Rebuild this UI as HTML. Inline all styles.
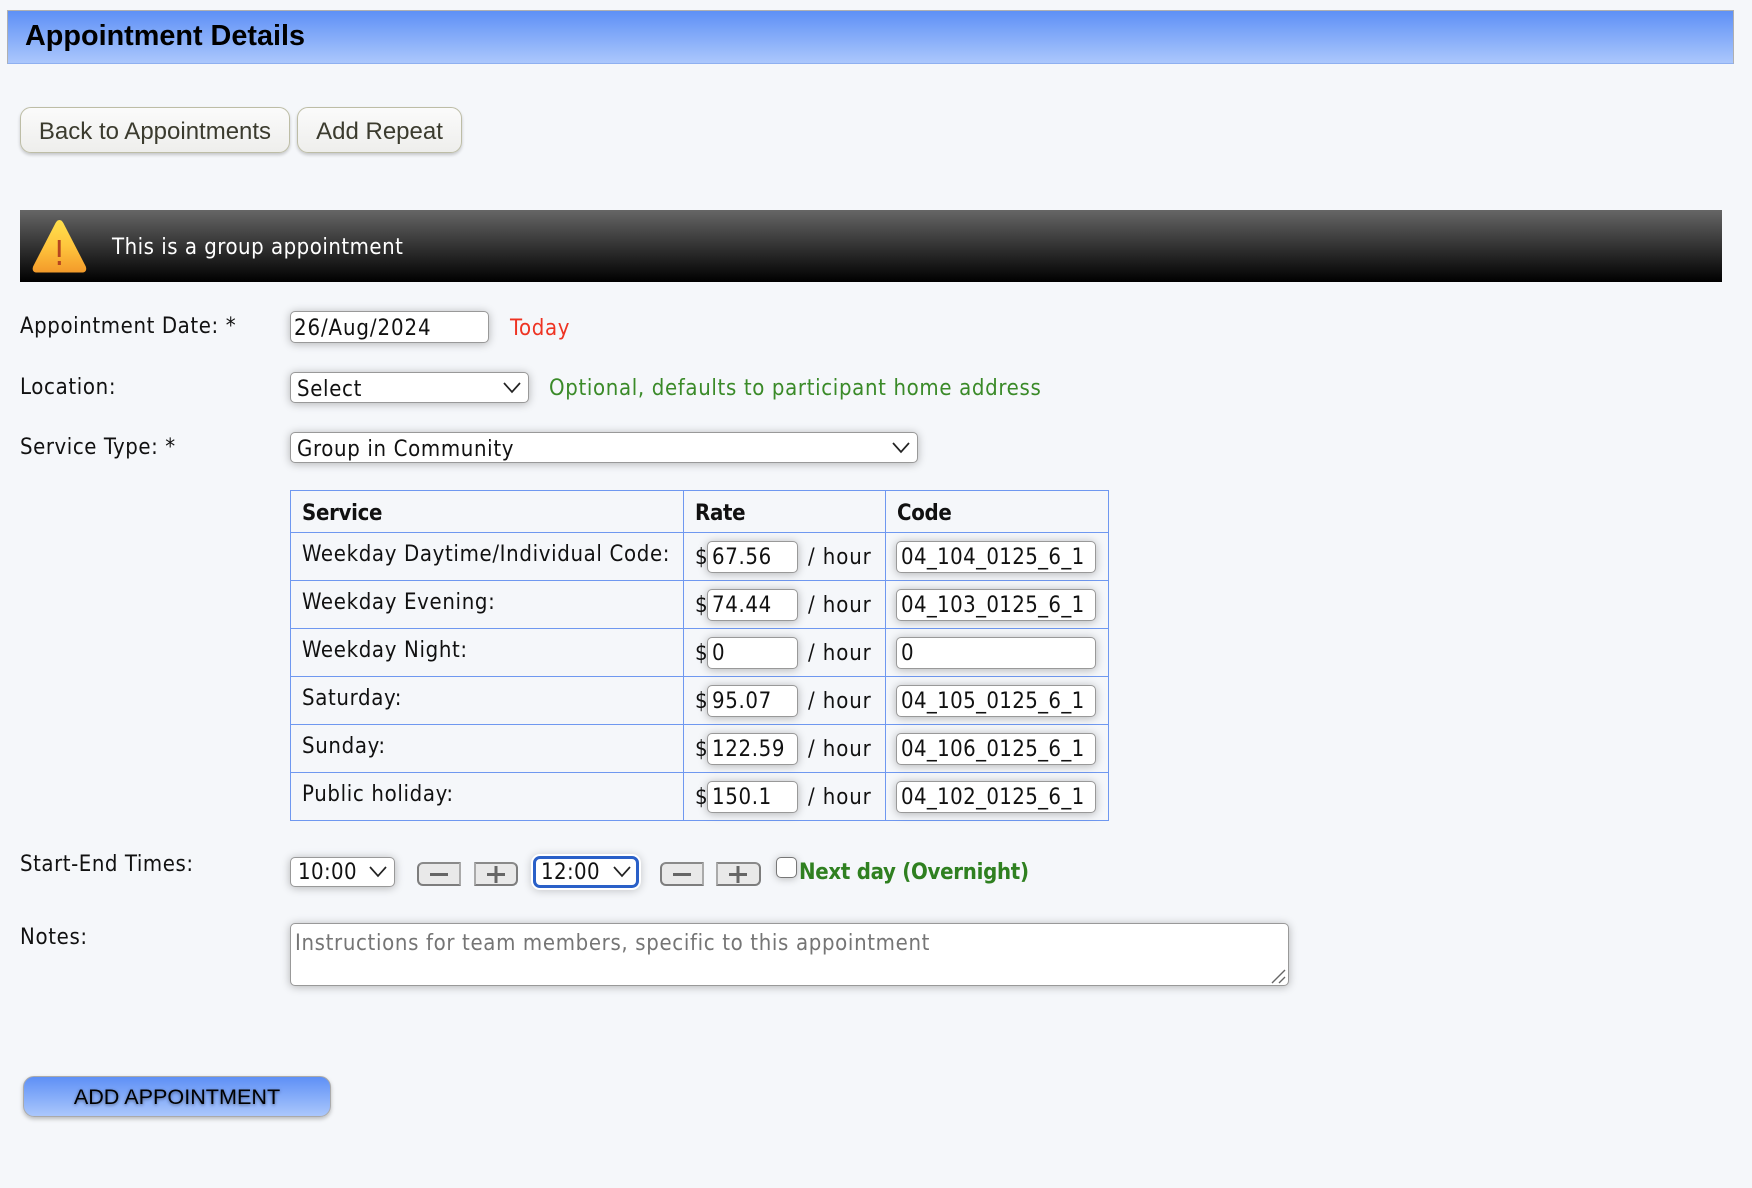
<!DOCTYPE html>
<html lang="en"><head><meta charset="utf-8"><title>Appointment Details</title>
<style>
*{box-sizing:border-box}
html,body{margin:0;padding:0;width:1752px;height:1188px;overflow:hidden;background:#f5f7fa}
body{position:relative;font-family:"DejaVu Sans Condensed","DejaVu Sans","Liberation Sans",sans-serif;font-stretch:condensed;font-size:22px;color:#111;letter-spacing:.65px}
.a,.t{position:absolute;white-space:nowrap}
.t{line-height:24px}
.hd{left:7px;top:10px;width:1727px;height:54px;background:linear-gradient(#5e90f6,#abc7fc);border:1px solid #b0b0b0;border-bottom:1px solid #8fb0f0}
.ttl{left:25px;top:20px;font:bold 28.800px/33px "Liberation Sans",sans-serif;color:#000;font-stretch:normal;letter-spacing:0}
.btn{position:absolute;top:107px;height:46px;border:1px solid #bdbda6;border-radius:11px;background:linear-gradient(#fbfbfb,#eeeeec);box-shadow:0 2px 3px rgba(0,0,0,.2);font:24px/48px "Liberation Sans",sans-serif;color:#3b3b2e;text-align:center;padding:0;font-stretch:normal;letter-spacing:0}
.warn{left:20px;top:210px;width:1702px;height:72px;background:linear-gradient(#666,#000)}
input,.sel,textarea{font:inherit;font-stretch:condensed;color:#111;letter-spacing:.65px}
input[type=text],.sel,textarea{position:absolute;background:#fff;border:1px solid #999;border-radius:5px;box-shadow:0 1px 9px rgba(0,0,0,.28);outline:none;margin:0}
input[type=text]{padding:0 3px 0 3px}
.sel{line-height:33px;padding-left:6px;white-space:nowrap}
.sel svg{position:absolute;top:8px}
table{position:absolute;left:290px;top:490px;border-collapse:collapse;table-layout:fixed;width:818px}
td,th{border:1px solid #6f98f0;padding:0;position:relative;text-align:left;font-weight:normal}
th{height:42px;font-weight:bold;letter-spacing:-.3px}
td{height:48px}
td span,th span{position:absolute;line-height:24px;white-space:nowrap}
td input[type=text]{top:8px;height:32px;padding-left:4px}
td .c{letter-spacing:.37px}
td .h{letter-spacing:.9px}
.bev{position:absolute;top:862px;height:24px;background:#e9e9e9;border:2px solid #7d7d7d;border-top-color:#8a8a8a}
.bev svg{position:absolute;left:0;top:0}
.m{border-radius:6px 0 0 6px;border-right-color:#aaa}
.p{border-radius:0 6px 6px 0;border-left-color:#aaa}
</style></head><body>
<div class="a hd"></div>
<div class="t ttl" style="position:absolute">Appointment Details</div>
<button class="btn" style="left:20px;width:270px">Back to Appointments</button>
<button class="btn" style="left:297px;width:165px">Add Repeat</button>
<div class="a warn"></div>
<svg class="a" style="left:30px;top:216px" width="60" height="60" viewBox="0 0 54 60" preserveAspectRatio="none"><defs><linearGradient id="w" x1="0" y1="0" x2="0" y2="1"><stop offset="0" stop-color="#ffe14d"/><stop offset=".5" stop-color="#ffc53d"/><stop offset="1" stop-color="#f39a2a"/></linearGradient></defs><path d="M26.500 4C28 4 29 5 30 7L50 50C51.500 54 50 56.500 47 56.500H6C3 56.500 1.500 54 3 50L23 7C24 5 25 4 26.500 4Z" fill="url(#w)"/><rect x="25" y="24" width="2.600" height="17" fill="#b5451f"/><rect x="25" y="45" width="2.800" height="4" fill="#b5451f"/></svg>
<div class="t" style="left:112px;top:236px;color:#fff;letter-spacing:.5px">This is a group appointment</div>

<div class="t" style="left:20px;top:315px;letter-spacing:.6px">Appointment Date: *</div>
<input type="text" value="26/Aug/2024" style="left:290px;top:311px;width:199px;height:32px;padding-top:2px;letter-spacing:.9px">
<div class="t" style="left:510px;top:317px;color:#ee3322">Today</div>

<div class="t" style="left:20px;top:376px">Location:</div>
<div class="sel" style="left:290px;top:372px;width:239px;height:31px">Select<svg style="right:5px" width="22" height="14" viewBox="0 0 22 14"><path d="M3 2L11 11L19 2" fill="none" stroke="#222" stroke-width="1.700"/></svg></div>
<div class="t" style="left:549px;top:377px;color:#3a8a28">Optional, defaults to participant home address</div>

<div class="t" style="left:20px;top:436px;letter-spacing:.55px">Service Type: *</div>
<div class="sel" style="left:290px;top:432px;width:628px;height:31px">Group in Community<svg style="right:5px" width="22" height="14" viewBox="0 0 22 14"><path d="M3 2L11 11L19 2" fill="none" stroke="#222" stroke-width="1.700"/></svg></div>

<table><colgroup><col style="width:393px"><col style="width:202px"><col style="width:223px"></colgroup>
<tr><th><span style="left:11px;top:11px">Service</span></th><th><span style="left:11px;top:11px">Rate</span></th><th><span style="left:11px;top:11px">Code</span></th></tr>
<tr><td><span style="left:11px;top:10px">Weekday Daytime/Individual Code:</span></td><td><span style="left:11px;top:13px">$</span><input type="text" value="67.56" style="left:23px;width:91px"><span class="h" style="left:124px;top:13px">/ hour</span></td><td><input class="c" type="text" value="04_104_0125_6_1" style="left:10px;width:200px"></td></tr>
<tr><td><span style="left:11px;top:10px">Weekday Evening:</span></td><td><span style="left:11px;top:13px">$</span><input type="text" value="74.44" style="left:23px;width:91px"><span class="h" style="left:124px;top:13px">/ hour</span></td><td><input class="c" type="text" value="04_103_0125_6_1" style="left:10px;width:200px"></td></tr>
<tr><td><span style="left:11px;top:10px">Weekday Night:</span></td><td><span style="left:11px;top:13px">$</span><input type="text" value="0" style="left:23px;width:91px"><span class="h" style="left:124px;top:13px">/ hour</span></td><td><input class="c" type="text" value="0" style="left:10px;width:200px"></td></tr>
<tr><td><span style="left:11px;top:10px">Saturday:</span></td><td><span style="left:11px;top:13px">$</span><input type="text" value="95.07" style="left:23px;width:91px"><span class="h" style="left:124px;top:13px">/ hour</span></td><td><input class="c" type="text" value="04_105_0125_6_1" style="left:10px;width:200px"></td></tr>
<tr><td><span style="left:11px;top:10px">Sunday:</span></td><td><span style="left:11px;top:13px">$</span><input type="text" value="122.59" style="left:23px;width:91px"><span class="h" style="left:124px;top:13px">/ hour</span></td><td><input class="c" type="text" value="04_106_0125_6_1" style="left:10px;width:200px"></td></tr>
<tr><td><span style="left:11px;top:10px">Public holiday:</span></td><td><span style="left:11px;top:13px">$</span><input type="text" value="150.1" style="left:23px;width:91px"><span class="h" style="left:124px;top:13px">/ hour</span></td><td><input class="c" type="text" value="04_102_0125_6_1" style="left:10px;width:200px"></td></tr>
</table>

<div class="t" style="left:20px;top:853px;letter-spacing:.55px">Start-End Times:</div>
<div class="sel" style="left:290px;top:857px;width:105px;height:30px;line-height:29px;padding-left:7px;letter-spacing:.4px">10:00<svg style="right:5px;top:7px" width="22" height="14" viewBox="0 0 22 14"><path d="M3 2L11 11L19 2" fill="none" stroke="#222" stroke-width="1.700"/></svg></div>
<div class="bev m" style="left:417px;width:44px"><svg width="40" height="20"><rect x="11" y="9" width="18" height="3" fill="#666"/></svg></div>
<div class="bev p" style="left:474px;width:44px"><svg width="40" height="20"><rect x="11" y="9" width="18" height="3" fill="#666"/><rect x="18.500" y="2" width="3" height="17" fill="#666"/></svg></div>
<div class="sel" style="left:533px;top:856px;width:106px;height:32px;border:3px solid #2a60c8;border-radius:7px;box-shadow:0 0 0 2px #fff,0 1px 9px 2px rgba(0,0,0,.2);line-height:27px;padding-left:5px;letter-spacing:.4px">12:00<svg style="right:3px;top:6px" width="22" height="14" viewBox="0 0 22 14"><path d="M3 2L11 11L19 2" fill="none" stroke="#222" stroke-width="1.700"/></svg></div>
<div class="bev m" style="left:660px;width:44px"><svg width="40" height="20"><rect x="11" y="9" width="18" height="3" fill="#666"/></svg></div>
<div class="bev p" style="left:716px;width:45px"><svg width="41" height="20"><rect x="11" y="9" width="18" height="3" fill="#666"/><rect x="18.500" y="2" width="3" height="17" fill="#666"/></svg></div>
<div class="a" style="left:776px;top:857px;width:21px;height:21px;background:#fff;border:1.500px solid #777;border-radius:5px;box-shadow:0 1px 8px rgba(0,0,0,.25)"></div>
<div class="t" style="left:799px;top:861px;color:#2f8020;font-weight:bold;letter-spacing:-.28px">Next day (Overnight)</div>

<div class="t" style="left:20px;top:926px">Notes:</div>
<textarea placeholder="Instructions for team members, specific to this appointment" style="left:290px;top:923px;width:999px;height:63px;padding:7px 3px 0 4px;resize:none;line-height:26px"></textarea>
<svg class="a" style="left:1270px;top:968px" width="16" height="16"><path d="M2 15L15 2M9 15L15 9" stroke="#666" stroke-width="1.400" fill="none"/></svg>

<button class="a" style="left:23px;top:1076px;width:308px;height:41px;padding:0;border:1px solid #aaa;border-radius:11px;background:linear-gradient(#5e90f6,#abc7fc);box-shadow:0 2px 4px rgba(0,0,0,.25);font:21.600px/34px 'Liberation Sans',sans-serif;color:#000;text-shadow:0 1px 3px rgba(0,0,0,.45);font-stretch:normal;letter-spacing:0">ADD APPOINTMENT</button>
</body></html>
